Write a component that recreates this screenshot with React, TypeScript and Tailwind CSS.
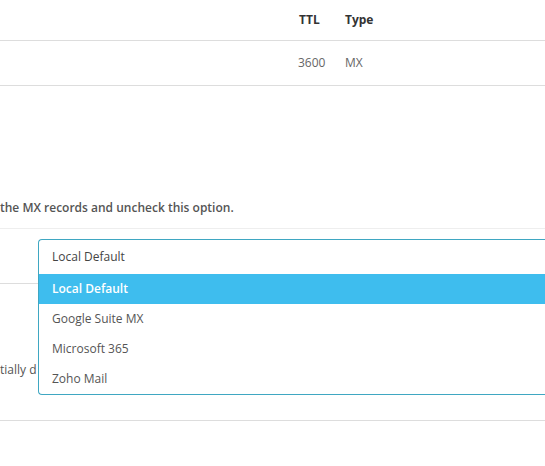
import React from 'react';

const OPTIONS = ['Local Default', 'Google Suite MX', 'Microsoft 365', 'Zoho Mail'];

const App: React.FC = () => {
  return (
    <div className="w-[545px] h-[466px] overflow-hidden bg-white font-['Open_Sans',sans-serif] text-[12px] text-[#555]">
      {/* Records table */}
      <div className="grid grid-cols-[299px_46px_1fr] h-[41px] items-center border-b border-[#ddd] font-bold text-[#333]">
        <div />
        <div>TTL</div>
        <div>Type</div>
      </div>
      <div className="grid grid-cols-[298px_47px_1fr] h-[45px] items-center border-b border-[#ddd] text-[#666]">
        <div />
        <div>3600</div>
        <div>MX</div>
      </div>

      {/* Option description */}
      <div className="h-[143px] flex items-end pb-[11px] border-b border-[#eee]">
        <p className="font-semibold leading-[18px] whitespace-nowrap">the MX records and uncheck this option.</p>
      </div>

      {/* Mail provider select */}
      <div className="h-[55px] pt-[10px] border-b border-[#ddd]">
        <div className="relative ml-[38px] w-[540px] z-10 text-[12px]">
          <div className="h-[35px] flex items-center pl-[13px] border-t border-l border-[#3fa7c2] rounded-tl-[4px] bg-white text-[#444]">
            Local Default
          </div>
          <ul className="absolute top-full left-0 w-full bg-white border-l border-b border-[#3fa7c2] rounded-bl-[4px]">
            {OPTIONS.map((opt, i) => (
              <li
                key={opt}
                className={
                  i === 0
                    ? 'h-[30px] flex items-center pl-[13px] bg-[#3ebdee] text-white font-semibold'
                    : 'h-[30px] flex items-center pl-[13px] text-[#555]'
                }
              >
                {opt}
              </li>
            ))}
          </ul>
        </div>
      </div>

      <div className="h-[137px] flex items-end pb-[41px] border-b border-[#ddd]">
        <p className="w-[38px] overflow-hidden leading-[18px] whitespace-nowrap">tially d</p>
      </div>
    </div>
  );
};

export default App;
